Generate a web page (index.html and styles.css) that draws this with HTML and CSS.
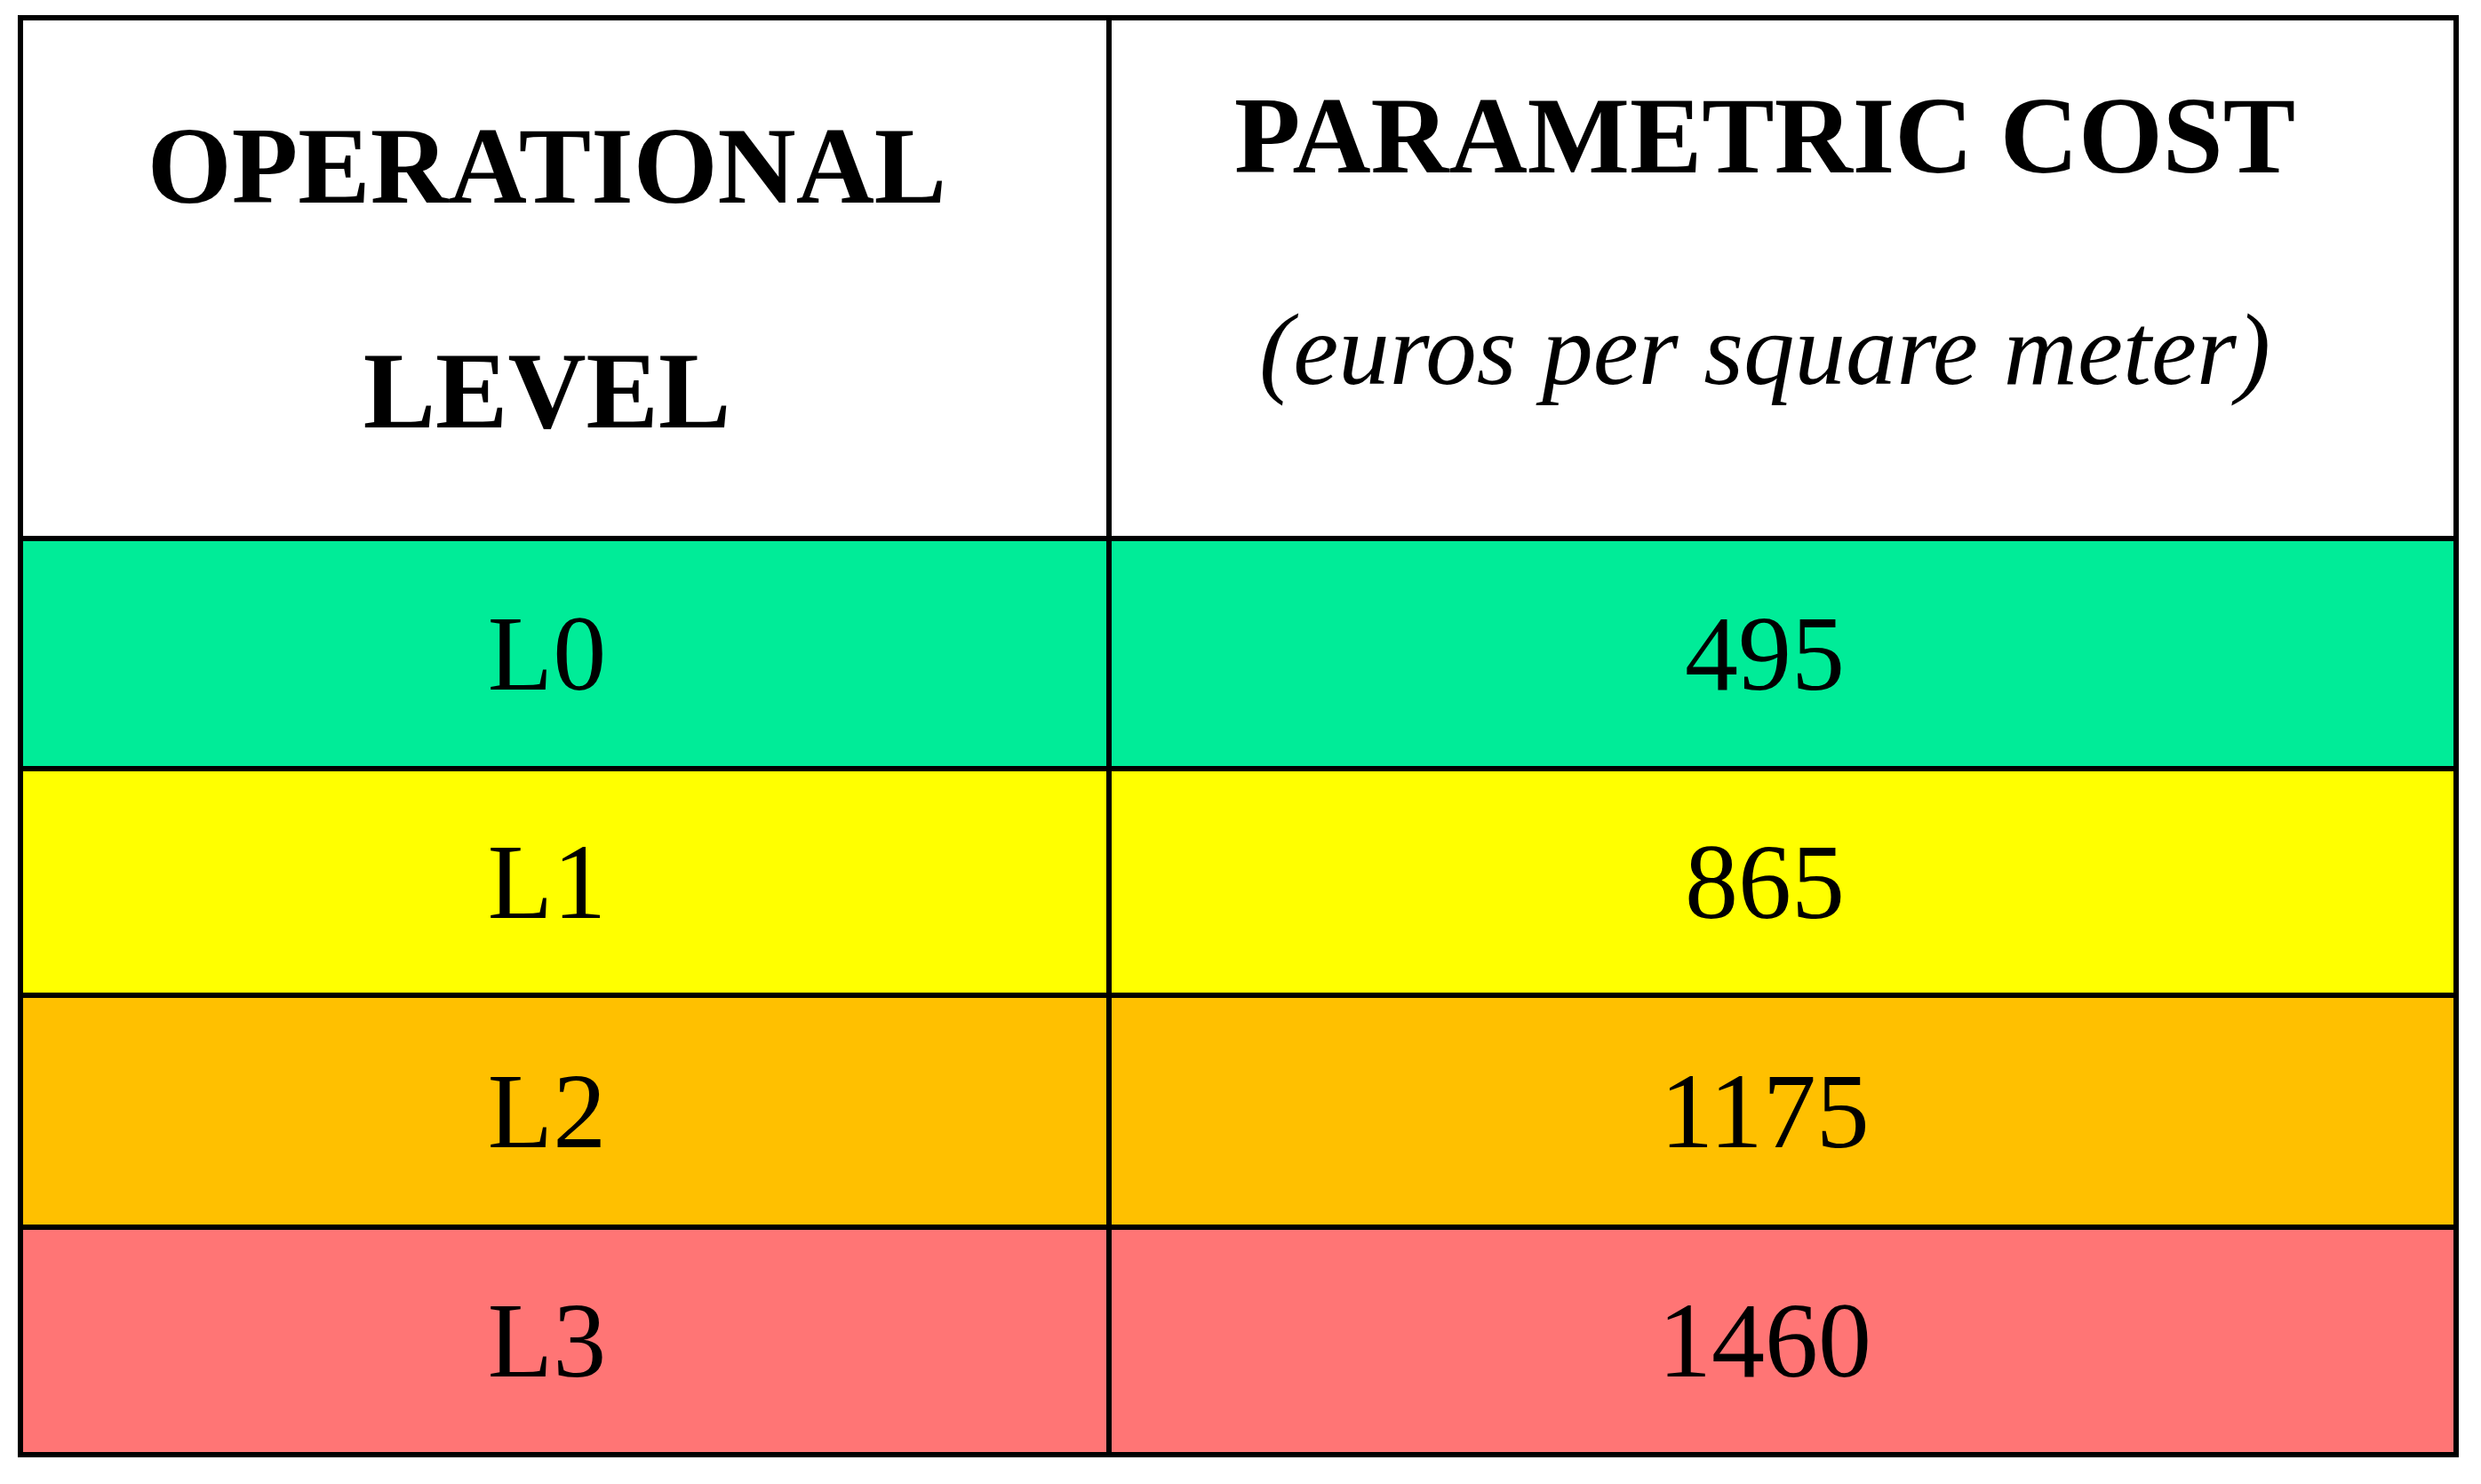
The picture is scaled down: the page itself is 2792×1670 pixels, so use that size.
FILE: index.html
```html
<!DOCTYPE html>
<html lang="en">
<head>
<meta charset="utf-8">
<title>Parametric cost by operational level</title>
<link rel="stylesheet" href="styles.css">
</head>
<body>
<div class="table">
  <div class="cell head"><span class="bold">OPERATIONAL</span><span class="bold">LEVEL</span></div>
  <div class="cell head head-right"><span class="bold">PARAMETRIC COST</span><span class="ital">(euros per square meter)</span></div>
  <div class="cell l0">L0</div>
  <div class="cell l0">495</div>
  <div class="cell l1">L1</div>
  <div class="cell l1">865</div>
  <div class="cell l2">L2</div>
  <div class="cell l2">1175</div>
  <div class="cell l3">L3</div>
  <div class="cell l3">1460</div>
</div>
</body>
</html>
```
FILE: styles.css
```css
html, body {
  margin: 0;
  padding: 0;
  background: #ffffff;
}
body {
  padding: 17px 0 0 20px;
  font-family: "Liberation Serif", "Times New Roman", serif;
  color: #000000;
}
.table {
  display: grid;
  width: 2735px;
  grid-template-columns: 1219px 1510px;
  grid-template-rows: 580px 253px 249px 255px 250px;
  column-gap: 6px;
  row-gap: 6px;
  padding: 6px;
  background: #000000;
}
.cell {
  display: flex;
  align-items: center;
  justify-content: center;
  padding-right: 40px;
  font-size: 120px;
  line-height: 1;
}
.head {
  flex-direction: column;
  background: #ffffff;
  line-height: 253px;
}
.head-right {
  line-height: 241px;
  padding-bottom: 80px;
}
.bold {
  font-weight: bold;
  font-size: 122px;
}
.ital {
  font-style: italic;
  font-size: 115px;
}
.l0 { background: #00ec98; }
.l1 { background: #ffff00; }
.l2 { background: #ffc000; }
.l3 { background: #ff7575; }
```
